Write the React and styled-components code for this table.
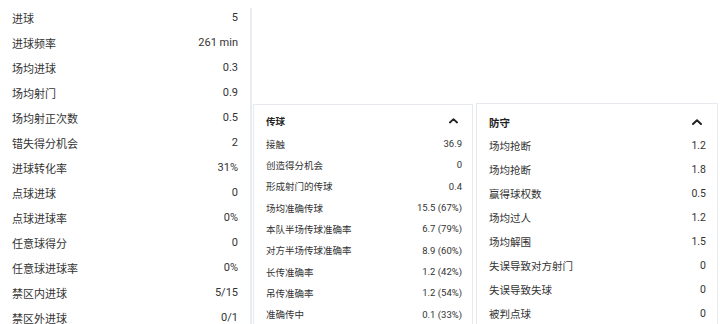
import React from "react";
import styled, { createGlobalStyle } from "styled-components";

const GlobalStyle = createGlobalStyle`
  html, body {
    margin: 0;
    padding: 0;
    background: #fff;
    overflow: hidden;
  }
  body {
    font-family: Roboto, "Noto Sans CJK SC", sans-serif;
    color: #333;
  }
`;

const attack = [
  ["进球", "5"],
  ["进球频率", "261 min"],
  ["场均进球", "0.3"],
  ["场均射门", "0.9"],
  ["场均射正次数", "0.5"],
  ["错失得分机会", "2"],
  ["进球转化率", "31%"],
  ["点球进球", "0"],
  ["点球进球率", "0%"],
  ["任意球得分", "0"],
  ["任意球进球率", "0%"],
  ["禁区内进球", "5/15"],
  ["禁区外进球", "0/1"],
];

const passing = [
  ["接触", "36.9"],
  ["创造得分机会", "0"],
  ["形成射门的传球", "0.4"],
  ["场均准确传球", "15.5 (67%)"],
  ["本队半场传球准确率", "6.7 (79%)"],
  ["对方半场传球准确率", "8.9 (60%)"],
  ["长传准确率", "1.2 (42%)"],
  ["吊传准确率", "1.2 (54%)"],
  ["准确传中", "0.1 (33%)"],
];

const defending = [
  ["场均抢断", "1.2"],
  ["场均抢断", "1.8"],
  ["赢得球权数", "0.5"],
  ["场均过人", "1.2"],
  ["场均解围", "1.5"],
  ["失误导致对方射门", "0"],
  ["失误导致失球", "0"],
  ["被判点球", "0"],
];

const Page = styled.div`
  display: flex;
  width: 720px;
  height: 324px;
  overflow: hidden;
`;

const LeftCol = styled.div`
  width: 250px;
  box-sizing: border-box;
  padding: 5px 12px 0 12px;
  flex-shrink: 0;
`;

const Divider = styled.div`
  width: 2px;
  margin-top: 8px;
  background: #e8ebf0;
  flex-shrink: 0;
`;

const RightArea = styled.div`
  flex: 1;
  display: flex;
  gap: 3px;
  padding: 103px 2px 0 1px;
  align-items: flex-start;
`;

const Row = styled.div`
  display: flex;
  justify-content: space-between;
  align-items: center;
  height: ${(p) => p.$h}px;
  font-size: ${(p) => p.$fs}px;
  color: #333;
  white-space: nowrap;
`;

const Card = styled.div`
  width: ${(p) => p.$w}px;
  box-sizing: border-box;
  border: 1px solid #e6e9ee;
  border-bottom: none;
  padding: ${(p) => p.$pt}px ${(p) => p.$pr}px 0 12px;
  margin-top: ${(p) => p.$mt}px;
  height: 240px;
  background: #fff;
`;

const Header = styled.div`
  display: flex;
  justify-content: space-between;
  align-items: center;
  height: ${(p) => p.$h}px;
  font-size: ${(p) => p.$fs}px;
  font-weight: 700;
  color: #222;
`;

const Chevron = ({ w }) => (
  <svg width={w} height={w * 0.6} viewBox="0 0 10 6" style={{ marginRight: 4 }}>
    <polyline
      points="1,5 5,1.3 9,5"
      fill="none"
      stroke="#222"
      strokeWidth="2"
      strokeLinecap="round"
      strokeLinejoin="round"
    />
  </svg>
);

const StatCard = ({ title, rows, w, mt, pt, pr, headH, rowH, fs, chev }) => (
  <Card $w={w} $mt={mt} $pt={pt} $pr={pr}>
    <Header $h={headH} $fs={fs}>
      <span>{title}</span>
      <Chevron w={chev} />
    </Header>
    {rows.map(([k, v], i) => (
      <Row key={i} $h={rowH} $fs={fs}>
        <span>{k}</span>
        <span>{v}</span>
      </Row>
    ))}
  </Card>
);

export default function App() {
  return (
    <Page>
      <GlobalStyle />
      <LeftCol>
        {attack.map(([k, v]) => (
          <Row key={k} $h={25} $fs={11}>
            <span>{k}</span>
            <span>{v}</span>
          </Row>
        ))}
      </LeftCol>
      <Divider />
      <RightArea>
        <StatCard
          title="传球"
          rows={passing}
          w={220}
          mt={1}
          pt={4}
          pr={10}
          headH={24}
          rowH={21.33}
          fs={9.5}
          chev={9}
        />
        <StatCard
          title="防守"
          rows={defending}
          w={242}
          mt={0}
          pt={7}
          pr={11}
          headH={22}
          rowH={24}
          fs={10.5}
          chev={10}
        />
      </RightArea>
    </Page>
  );
}
